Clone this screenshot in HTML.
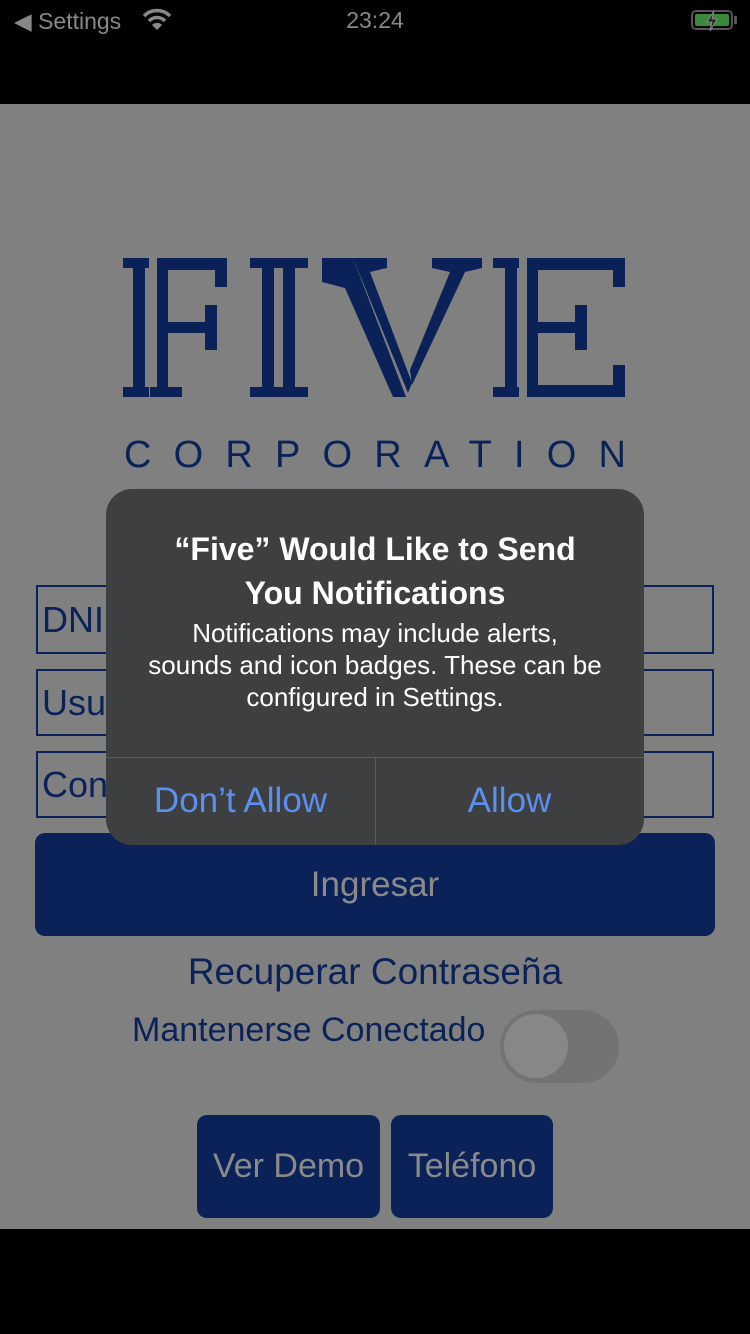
<!DOCTYPE html>
<html><head><meta charset="utf-8"><style>
*{margin:0;padding:0;box-sizing:border-box}
body{width:750px;height:1334px;background:#000;position:relative;overflow:hidden;font-family:"Liberation Sans",sans-serif}
.abs{position:absolute}
.page{left:0;top:104px;width:750px;height:1125px;background:#808080}
.inp{position:absolute;left:36px;width:678px;border:2px solid #0a2258;color:#0a2258;font-size:36px;padding-left:4px;display:flex;align-items:center}
.btn{position:absolute;background:#0a2258;color:#8a8a8a;border-radius:10px;display:flex;align-items:center;justify-content:center;font-size:34px}
.t{color:#0a2258;position:absolute;white-space:nowrap}
</style></head><body>
<div class="abs" style="left:14px;top:8px;color:#888;font-size:23px">&#9664; Settings</div>
<svg class="abs" style="left:142px;top:8px" width="30" height="24" viewBox="0 0 30 24"><path d="M2 8 A18 18 0 0 1 28 8" stroke="#888" stroke-width="3.5" fill="none"/><path d="M7 13 A11 11 0 0 1 23 13" stroke="#888" stroke-width="3.5" fill="none"/><path d="M15 22 L10 17 A7 7 0 0 1 20 17 Z" fill="#888"/></svg>
<div class="abs" style="left:0;width:750px;top:7px;text-align:center;color:#888;font-size:23px">23:24</div>
<div class="abs" style="left:691px;top:10px;width:42px;height:20px;border:2px solid #555;border-radius:5px;padding:2px"><div style="width:100%;height:100%;background:#3a8a3a;border-radius:2px"></div></div>
<div class="abs" style="left:734px;top:16px;width:3px;height:8px;background:#555"></div>
<svg class="abs" style="left:702px;top:10px" width="20" height="22"><path d="M12 1 L5 12 H10 L8 21 L15 9 H10 Z" fill="#222" stroke="#888" stroke-width="1"/></svg>
<div class="abs page"></div>
<svg class="abs" style="left:0;top:0" width="750" height="480">
<g fill="#0a2258">
<rect x="133" y="258" width="12" height="139"/><rect x="123" y="258" width="26" height="10"/><rect x="123" y="387" width="26" height="10"/>
<rect x="157" y="258" width="11" height="139"/><rect x="157" y="258" width="70" height="12"/><rect x="215" y="258" width="12" height="29"/>
<rect x="157" y="322" width="55" height="11"/><rect x="205" y="305" width="12" height="45"/><rect x="150" y="387" width="32" height="10"/>
<rect x="250" y="258" width="58" height="10"/><rect x="250" y="387" width="58" height="10"/><rect x="262" y="258" width="12" height="139"/><rect x="283" y="258" width="12" height="139"/>
<polygon points="322,258 353,258 406,397 393,397 345,288 322,282"/>
<polygon points="353,258 387,258 387,268 370,272 412,383 408,393"/>
<polygon points="432,258 482,258 482,268 465,272 412,385 410,370 450,272 432,268"/>
<rect x="493" y="258" width="26" height="10"/><rect x="493" y="387" width="26" height="10"/><rect x="505" y="258" width="12" height="139"/>
<rect x="527" y="258" width="11" height="139"/><rect x="527" y="258" width="98" height="12"/><rect x="613" y="258" width="12" height="29"/>
<rect x="527" y="322" width="55" height="11"/><rect x="575" y="305" width="12" height="45"/>
<rect x="527" y="385" width="98" height="12"/><rect x="613" y="365" width="12" height="30"/>
</g>
<text x="124" y="467" fill="#0a2258" font-family="Liberation Sans" font-size="38" textLength="502" lengthAdjust="spacing">CORPORATION</text>
</svg>
<div class="inp" style="top:585px;height:69px">DNI</div>
<div class="inp" style="top:669px;height:67px">Usuario</div>
<div class="inp" style="top:751px;height:67px">Contraseña</div>
<div class="btn" style="left:35px;top:833px;width:680px;height:103px;font-size:35px">Ingresar</div>
<div class="t" style="left:0;width:750px;text-align:center;top:951px;font-size:37px">Recuperar Contraseña</div>
<div class="t" style="left:132px;top:1011px;font-size:34px">Mantenerse Conectado</div>
<div class="abs" style="left:500px;top:1010px;width:119px;height:73px;border-radius:37px;background:#737373"></div>
<div class="abs" style="left:504px;top:1014px;width:64px;height:64px;border-radius:50%;background:#878787"></div>
<div class="btn" style="left:197px;top:1115px;width:183px;height:103px">Ver Demo</div>
<div class="btn" style="left:391px;top:1115px;width:162px;height:103px">Teléfono</div>
<div class="abs" style="left:106px;top:489px;width:538px;height:356px;background:#3e3f41;border-radius:26px;overflow:hidden;color:#fff;text-align:center">
<div style="font-size:32px;font-weight:bold;line-height:44px;margin-top:38px">“Five” Would Like to Send<br>You Notifications</div>
<div style="font-size:26px;line-height:32px;margin-top:2px;white-space:nowrap">Notifications may include alerts,<br>sounds and icon badges. These can be<br>configured in Settings.</div>
<div class="abs" style="left:0;top:268px;width:538px;height:1px;background:#5c5c5e"></div>
<div class="abs" style="left:269px;top:268px;width:1px;height:88px;background:#5c5c5e"></div>
<div class="abs" style="left:0;top:292px;width:269px;color:#5b8ff0;font-size:35px">Don’t Allow</div>
<div class="abs" style="left:269px;top:292px;width:269px;color:#5b8ff0;font-size:35px">Allow</div>
</div>
</body></html>
